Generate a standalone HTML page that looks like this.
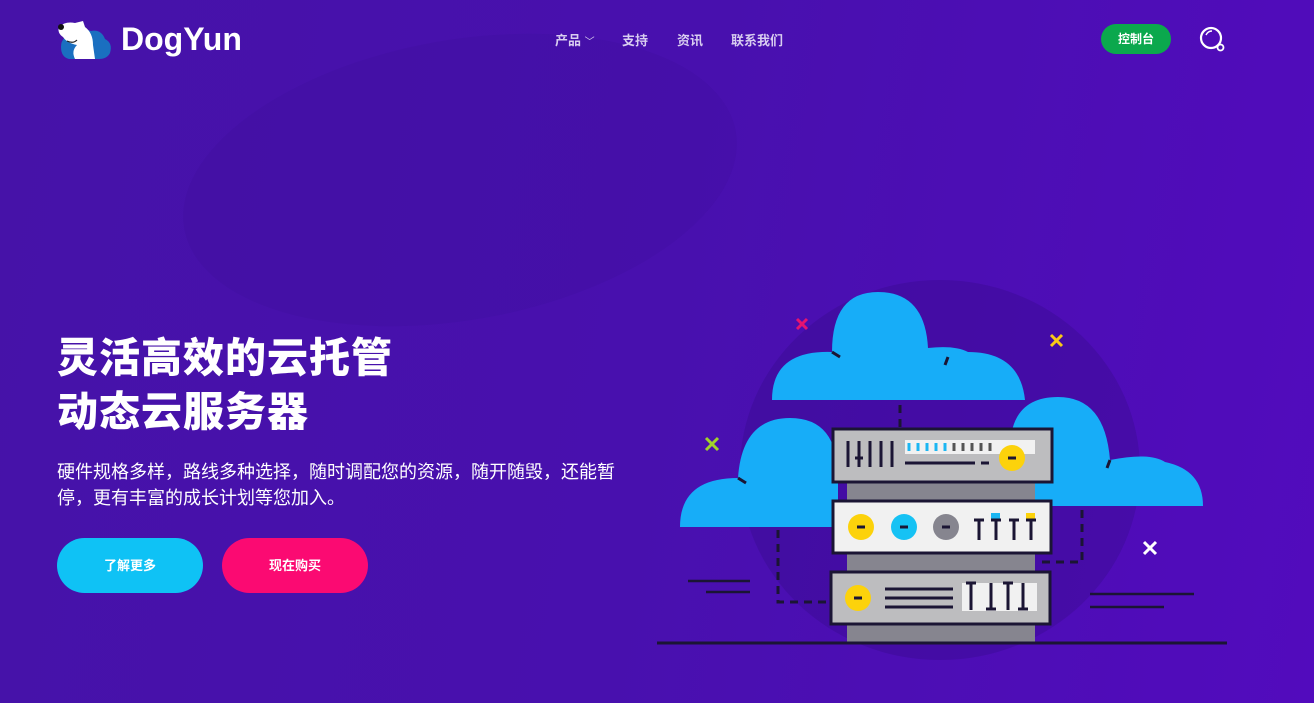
<!DOCTYPE html>
<html><head><meta charset="utf-8"><style>
*{margin:0;padding:0;box-sizing:border-box}
body{width:1314px;height:703px;overflow:hidden;background:linear-gradient(100deg,#4612a8 0%,#4810ae 50%,#520bbd 100%);font-family:"Liberation Sans","Noto Sans CJK SC",sans-serif;position:relative;color:#fff}
.blob{position:absolute;border-radius:50%;background:rgba(40,10,120,.08)}
.nav{position:absolute;top:30px;font-size:13px;font-weight:bold;color:#d8cdf0}
h1{position:absolute;left:57px;top:331px;font-size:41px;line-height:54px;font-weight:900;letter-spacing:1px}
p.d{position:absolute;left:57px;top:459px;width:570px;font-size:18px;line-height:26px}
.btn{position:absolute;top:538px;width:146px;height:55px;border-radius:28px;font-size:13px;font-weight:bold;text-align:center;line-height:55px}
</style></head><body>
<div class="blob" style="left:180px;top:40px;width:560px;height:280px;transform:rotate(-10deg)"></div>
<div class="blob" style="left:740px;top:280px;width:400px;height:380px;background:rgba(50,10,130,.3)"></div>
<svg style="position:absolute;left:57px;top:17px" width="56" height="44" viewBox="0 0 56 44">
<path d="M4 30 Q4 18 18 18 Q24 10 34 14 Q44 12 48 22 Q56 26 53 36 Q50 42 42 42 L12 42 Q4 40 4 30Z" fill="#1a6fc0"/>
<path d="M2 10 Q8 4 18 6 L26 4 L28 10 Q36 16 36 28 L38 42 L18 42 Q14 34 20 28 Q10 26 6 20 Q0 16 2 10Z" fill="#fff"/>
<circle cx="4" cy="10" r="3" fill="#111"/><path d="M10 24 Q16 27 20 23" stroke="#222" stroke-width="1.2" fill="none"/>
</svg>
<div style="position:absolute;left:121px;top:21px;font-size:32px;font-weight:bold;font-family:'Liberation Sans',sans-serif">DogYun</div>
<div class="nav" style="left:555px">产品 <span style="font-weight:normal;font-size:10px">﹀</span></div>
<div class="nav" style="left:622px">支持</div>
<div class="nav" style="left:677px">资讯</div>
<div class="nav" style="left:731px">联系我们</div>
<div style="position:absolute;left:1101px;top:24px;width:70px;height:30px;border-radius:15px;background:#0ba84d;font-size:12px;font-weight:bold;text-align:center;line-height:30px">控制台</div>
<svg style="position:absolute;left:1198px;top:26px" width="30" height="28"><circle cx="13" cy="12" r="10" stroke="#fff" stroke-width="2.2" fill="none"/><path d="M8 9 Q10 5 14 5" stroke="#fff" stroke-width="1.5" fill="none"/><circle cx="22.5" cy="21.5" r="3" stroke="#fff" stroke-width="1.8" fill="#4a10b0"/></svg>
<h1>灵活高效的云托管<br>动态云服务器</h1>
<p class="d">硬件规格多样，路线多种选择，随时调配您的资源，随开随毁，还能暂停，更有丰富的成长计划等您加入。</p>
<div class="btn" style="left:57px;background:#0fc2f5">了解更多</div>
<div class="btn" style="left:222px;background:#fb0a72">现在购买</div>
<svg style="position:absolute;left:0;top:0" width="1314" height="703">
<g fill="#17adf8">
<path d="M772 400 Q772 350 832 352 Q832 292 878 292 Q925 292 928 348 Q955 345 968 352 Q1020 352 1025 400Z"/>
<path d="M680 527 Q680 478 738 478 Q742 418 790 418 Q838 418 838 478 L838 527Z"/>
<path d="M1010 506 L1010 450 Q1010 397 1058 397 Q1105 397 1110 460 Q1150 452 1165 462 Q1203 470 1203 506Z"/>
</g>
<g stroke="#1b1534" stroke-width="3" fill="none">
<path d="M832 352 l8 5 M945 365 l3 -8 M738 478 l8 5 M1110 460 l-3 8"/>
<path d="M900 405 v22 M778 530 v72 h50 M1082 510 v52 h-40" stroke-dasharray="8 6"/>
</g>
<path d="M797 319 l10 10 M807 319 l-10 10" stroke="#e6146f" stroke-width="3"/>
<path d="M1051 335 l11 11 M1062 335 l-11 11" stroke="#f9c916" stroke-width="3"/>
<path d="M706 438 l12 12 M718 438 l-12 12" stroke="#a0d22b" stroke-width="3"/>
<path d="M1144 542 l12 12 M1156 542 l-12 12" stroke="#fff" stroke-width="3"/>
<g stroke="#1b1534" stroke-width="2.5"><path d="M688 581 h62 M706 592 h44 M1090 594 h104 M1090 607 h74"/></g>
<rect x="847" y="482" width="188" height="160" fill="#86858f"/>
<path d="M657 643 H1227" stroke="#1b1534" stroke-width="3"/>
<g stroke="#1b1534" stroke-width="3">
<rect x="833" y="429" width="219" height="53" fill="#bdbdbf"/>
<rect x="833" y="501" width="218" height="52" fill="#f1f1f1"/>
<rect x="831" y="572" width="219" height="52" fill="#bdbdbf"/>
</g>
<rect x="905" y="440" width="130" height="14" fill="#f1f1f1"/>
<g stroke="#1b1534" stroke-width="3"><path d="M848 441v26M859 441v26M870 441v26M881 441v26M892 441v26M905 463h70M981 463h8"/></g>
<g stroke="#1cb6f2" stroke-width="3"><path d="M909 443v8M918 443v8M927 443v8M936 443v8M945 443v8"/></g>
<g stroke="#555" stroke-width="3"><path d="M954 443v8M963 443v8M972 443v8M981 443v8M990 443v8"/></g>
<circle cx="1012" cy="458" r="13" fill="#fcd20b"/>
<circle cx="861" cy="527" r="13" fill="#fcd20b"/><circle cx="904" cy="527" r="13" fill="#16c2f4"/><circle cx="946" cy="527" r="13" fill="#86858f"/>
<circle cx="858" cy="598" r="13" fill="#fcd20b"/>
<rect x="991" y="513" width="9" height="8" fill="#1cb6f2"/><rect x="1026" y="513" width="9" height="8" fill="#fcd20b"/>
<rect x="962" y="583" width="75" height="28" fill="#f1f1f1"/>
<g stroke="#1b1534" stroke-width="3">
<path d="M855 458h8M1008 458h8M857 527h8M900 527h8M942 527h8M854 598h8"/>
<path d="M974 520h10M979 520v20M991 520h10M996 520v20M1009 520h10M1014 520v20M1026 520h10M1031 520v20"/>
<path d="M885 589h68M885 598h68M885 607h68"/>
<path d="M966 583h10M971 583v27M986 609h10M991 583v27M1003 583h10M1008 583v27M1018 609h10M1023 583v27"/>
</g>
</svg>
</body></html>
